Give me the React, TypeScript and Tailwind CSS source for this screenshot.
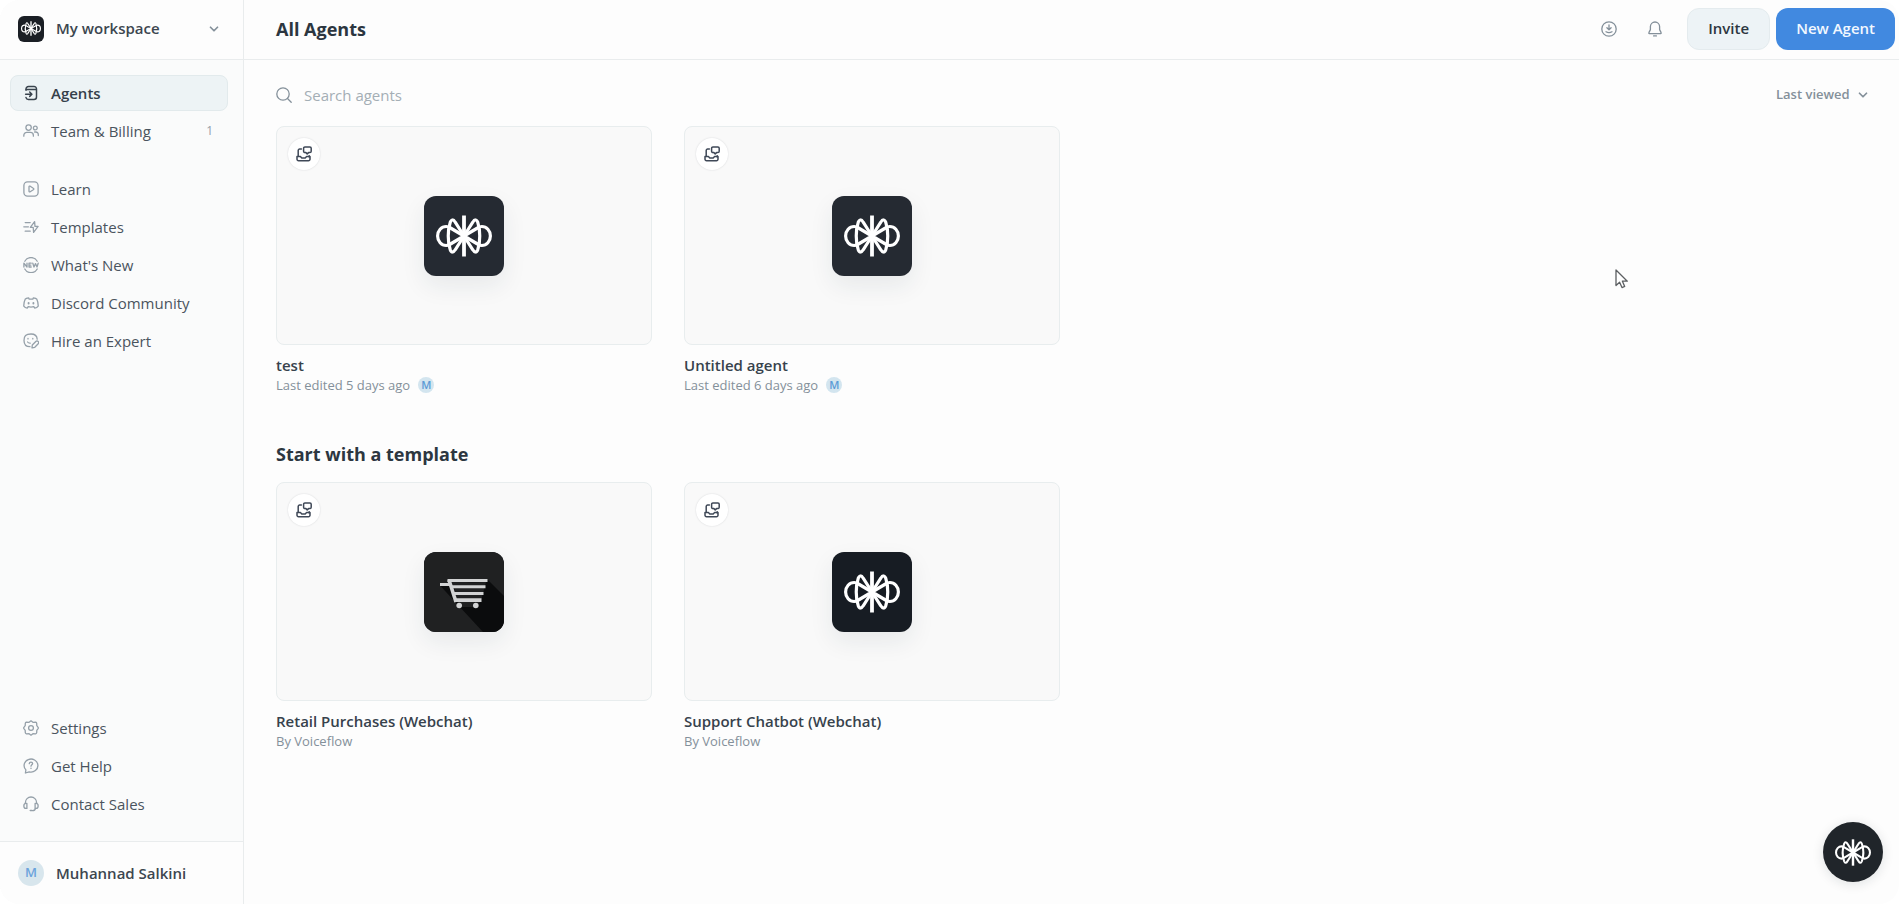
import type { ReactNode } from "react";
import { ChevronDown } from "lucide-react";

function Mark({ className }: { className?: string }) {
  const wing = (
    <>
      <path d="M28 21 L14.500 13 C12.600 11.900 11.200 11.500 10.200 11.500 A8.600 9.500 0 0 0 10.200 30.500 C11.200 30.500 12.600 30.100 14.500 29 Z" />
      <path d="M28 21 L19.200 7.200 C17.400 4.200 15.400 4.200 14.200 7.400 C11.600 15 11.600 27 14.200 34.600 C15.400 37.800 17.400 37.800 19.200 34.800 Z" />
    </>
  );
  return (
    <svg viewBox="0 0 56 42" className={className} fill="none" stroke="#fff" strokeWidth="3.2" strokeLinejoin="round" aria-hidden="true">
      {wing}
      <g transform="matrix(-1 0 0 1 56 0)">{wing}</g>
      <path d="M28 0.500 V41.500" strokeWidth="3.800" />
    </svg>
  );
}

function Icon({ children, className = "size-4" }: { children: ReactNode; className?: string }) {
  return (
    <svg viewBox="0 0 16 16" className={`shrink-0 ${className}`} fill="none" stroke="currentColor" strokeWidth="1.3" strokeLinecap="round" strokeLinejoin="round" aria-hidden="true">
      {children}
    </svg>
  );
}

const icons = {
  agents: (
    <g strokeWidth="1.5">
      <path d="M3 5.2 V4 a2.5 2.5 0 0 1 2.5-2.5 h5 A2.5 2.5 0 0 1 13.5 4 v8 a2.5 2.5 0 0 1-2.5 2.5 H5.5 A2.5 2.5 0 0 1 3 12.6" />
      <path d="M3.2 4.6 H13.3" />
      <path d="M2.6 9.2 H8.6 M6.7 7 L8.9 9.2 L6.7 11.4" />
    </g>
  ),
  team: (
    <>
      <circle cx="5.6" cy="4.6" r="2.7" />
      <path d="M0.8 13.2 V12.4 a3 3 0 0 1 3-3 h3.6 a3 3 0 0 1 3 3 V13.2" />
      <circle cx="12.3" cy="5" r="1.9" />
      <path d="M11.6 9 h1.2 a2.5 2.5 0 0 1 2.5 2.5 V12.6" />
    </>
  ),
  learn: (
    <>
      <rect x="0.9" y="0.9" width="14.2" height="14.2" rx="3.6" />
      <path d="M6 5.8 C6 5 6.6 4.9 7.2 5.2 L10.3 7.2 C11 7.6 11 8.3 10.3 8.8 L7.2 10.7 C6.6 11.1 6 10.9 6 10.2 Z" />
    </>
  ),
  templates: (
    <>
      <path d="M2.2 3.6 H7.2 M0.8 7.8 H5.4 M2.2 12.2 H7.2" />
      <path d="M11.6 2.6 L7.3 8.3 H10.2 L10.6 13.4 L15.1 7.4 H12 Z" />
    </>
  ),
  expert: (
    <>
      <path d="M14.2 6.2 C14 3 12.6 1 8 1 C2.8 1 1 3 1 7.4 C1 11.4 2.6 13.6 7 13.7" />
      <path d="M5 5.4 V5.9 M9.8 5.4 V5.9 M4.6 9 C5.3 10 6.2 10.3 7.2 10.2" />
      <path d="M9 14.9 L9.3 12 L12.8 8.5 A1.6 1.6 0 0 1 15.2 10.8 L11.8 14.3 Z" />
    </>
  ),
  settings: (
    <>
      <path d="M8 0.8 L9.9 2.3 L12.6 2.1 A1.5 1.5 0 0 1 13.7 3.3 L13.8 5.7 L15.1 7.3 A1.3 1.3 0 0 1 15.1 8.7 L13.8 10.3 L13.7 12.6 A1.5 1.5 0 0 1 12.6 13.8 L9.9 13.7 L8 15.2 L6.1 13.7 L3.4 13.8 A1.5 1.5 0 0 1 2.3 12.6 L2.2 10.3 L0.9 8.7 A1.3 1.3 0 0 1 0.9 7.3 L2.2 5.7 L2.3 3.3 A1.5 1.5 0 0 1 3.4 2.1 L6.1 2.3 Z" />
      <circle cx="8" cy="8" r="2.4" />
    </>
  ),
  help: (
    <>
      <path d="M2.4 15 L2.9 11.9 A6.9 6.5 0 1 1 6.2 13.8 Z" />
      <path d="M6.3 5.6 C6.4 3.6 9.6 3.6 9.6 5.6 C9.6 6.8 8 6.9 8 8.2 M8 10.2 V10.4" />
    </>
  ),
  sales: (
    <>
      <path d="M2.4 7.4 V6.6 A5.6 5.6 0 0 1 13.6 6.6 V7.4" />
      <path d="M3.9 7.4 H2.8 C0.2 7.6 0.2 12.2 2.8 12.4 H3.9 Z M12.1 7.4 H13.2 C15.8 7.6 15.8 12.2 13.2 12.4 H12.1 Z" />
      <path d="M12.4 12.6 C12.2 14.2 11 14.6 9.4 14.6 M7.2 14.5 H8.8" />
    </>
  ),
};

const newIcon = (
  <Icon>
    <path d="M1.8 4.2 A7.1 7.1 0 0 1 14.2 4.2 M1.8 12 A7.1 7.1 0 0 0 14.2 12" />
    <path d="M0.9 10 V6.2 L4 10 V6.2 M8.2 6.2 H6 V10 H8.2 M6 8.1 H7.9 M9.8 6.2 L11 10 L12.5 6.6 L14 10 L15.2 6.2" />
  </Icon>
);

const discordIcon = (
  <Icon>
    <path d="M5.6 2.8 C3.8 3 2.6 3.6 2.2 4.2 C1.2 6.2 0.7 8.6 0.8 11.2 C1.6 12.3 2.8 13 4.2 13.2 L5.2 11.7 C7 12.2 9 12.2 10.8 11.7 L11.8 13.2 C13.2 13 14.4 12.3 15.2 11.2 C15.3 8.6 14.8 6.2 13.8 4.2 C13.4 3.6 12.2 3 10.4 2.8 L9.8 4.2 H6.2 Z" />
    <path d="M5.6 7.9 V8.6 M10.4 7.9 V8.6" strokeWidth="1.9" />
  </Icon>
);

type NavEntry = { label: string; icon: ReactNode; active?: boolean; count?: number };

const primary: NavEntry[] = [
  { label: "Agents", icon: <Icon>{icons.agents}</Icon>, active: true },
  { label: "Team & Billing", icon: <Icon>{icons.team}</Icon>, count: 1 },
];
const resources: NavEntry[] = [
  { label: "Learn", icon: <Icon>{icons.learn}</Icon> },
  { label: "Templates", icon: <Icon>{icons.templates}</Icon> },
  { label: "What's New", icon: newIcon },
  { label: "Discord Community", icon: discordIcon },
  { label: "Hire an Expert", icon: <Icon>{icons.expert}</Icon> },
];
const support: NavEntry[] = [
  { label: "Settings", icon: <Icon>{icons.settings}</Icon> },
  { label: "Get Help", icon: <Icon>{icons.help}</Icon> },
  { label: "Contact Sales", icon: <Icon>{icons.sales}</Icon> },
];

function NavList({ items }: { items: NavEntry[] }) {
  return (
    <ul className="flex flex-col gap-0.5">
      {items.map((item) => (
        <li key={item.label}>
          <a
            href="#"
            aria-current={item.active ? "page" : undefined}
            className={
              item.active
                ? "flex h-9 items-center gap-3 rounded-lg border border-[#e2eaec] bg-[#edf3f5] px-3 text-[15px] font-semibold text-[#35404a]"
                : "flex h-9 items-center gap-3 rounded-lg border border-transparent px-3 text-[15px] text-[#4a545e]"
            }
          >
            <span className={item.active ? "text-[#39434d]" : "text-[#95a0a9]"}>{item.icon}</span>
            <span className="grow">{item.label}</span>
            {item.count !== undefined && <span className="pr-0.5 text-xs text-[#95a0a9]">{item.count}</span>}
          </a>
        </li>
      ))}
    </ul>
  );
}

function CartArt() {
  return (
    <svg viewBox="0 0 80 80" className="size-20 rounded-xl" aria-hidden="true">
      <rect width="80" height="80" fill="#202122" />
      <path d="M63.500 27.500 L80 44 V80 H59 L16.500 34 L30 33 Z" fill="#0b0c0d" />
      <path d="M29 31 L62 30 L57 49 L51 55 H35 Z" fill="#202122" />
      <g fill="none" stroke="#d2d3d4" strokeWidth="3">
        <path d="M23.500 28.500 H63.500" />
        <path d="M16 32.500 H26" />
        <path d="M25 28 L32 50" strokeWidth="3.600" />
        <path d="M28 34.800 H61.500" />
        <path d="M30 41.500 H59.500" />
        <path d="M31 48.200 H57.500" strokeWidth="3.800" />
      </g>
      <circle cx="35.200" cy="53.500" r="2.800" fill="#d2d3d4" />
      <circle cx="51.800" cy="53.500" r="2.800" fill="#d2d3d4" />
    </svg>
  );
}

type Card = { title: string; detail: string; art: "soft" | "dark" | "cart"; avatar?: string };

const agents: Card[] = [
  { title: "test", detail: "Last edited 5 days ago", art: "soft", avatar: "M" },
  { title: "Untitled agent", detail: "Last edited 6 days ago", art: "soft", avatar: "M" },
];
const templates: Card[] = [
  { title: "Retail Purchases (Webchat)", detail: "By Voiceflow", art: "cart" },
  { title: "Support Chatbot (Webchat)", detail: "By Voiceflow", art: "dark" },
];

function CardGrid({ cards }: { cards: Card[] }) {
  return (
    <ul className="grid grid-cols-[repeat(auto-fill,376px)] gap-8">
      {cards.map((card) => (
        <li key={card.title}>
          <a href="#" className="block">
            <div className="relative flex h-[219px] items-center justify-center rounded-lg border border-[#e8edee] bg-[#f9f9f9]">
              <span className="absolute top-[11px] left-[11px] flex size-8 items-center justify-center rounded-full bg-white text-[#3f4857] shadow-[0_0_2px_rgba(20,30,40,0.15)]">
                <Icon>
                  <g strokeWidth="1.5">
                    <path d="M5.400 3 H3.600 A1.400 1.400 0 0 0 2.200 4.400 V10.300 M13.200 9.800 V11" />
                    <path d="M1 10.600 H4.400 L5.800 12.100 H9.200 L10.600 10.600 H14 V13.200 A1.500 1.500 0 0 1 12.500 14.700 H2.500 A1.500 1.500 0 0 1 1 13.200 Z" />
                    <path d="M8.900 1 H13.900 A1.300 1.300 0 0 1 15.200 2.300 V5.300 A1.300 1.300 0 0 1 13.900 6.600 H12.600 L11.200 7.900 L9.900 6.600 H8.900 A1.300 1.300 0 0 1 7.600 5.300 V2.300 A1.300 1.300 0 0 1 8.900 1 Z" />
                  </g>
                </Icon>
              </span>
              <div
                className={
                  card.art === "soft"
                    ? "flex size-20 items-center justify-center rounded-xl bg-[#252a32] shadow-[0_10px_24px_rgba(30,45,60,0.08)]"
                    : "flex size-20 items-center justify-center rounded-xl bg-[#171c23] shadow-[0_10px_24px_rgba(30,45,60,0.08)]"
                }
              >
                {card.art === "cart" ? <CartArt /> : <Mark className="w-14" />}
              </div>
            </div>
            <h3 className="mt-2 text-[15px] leading-6 font-semibold text-[#37424c]">{card.title}</h3>
            <div className="flex items-center gap-2 text-[13px] leading-4 text-[#84909a]">
              <span>{card.detail}</span>
              {card.avatar && (
                <span className="flex size-4 items-center justify-center rounded-full bg-[#d3e5ef] text-[11px] font-semibold text-[#5b9bd6]">
                  {card.avatar}
                </span>
              )}
            </div>
          </a>
        </li>
      ))}
    </ul>
  );
}

export default function App() {
  return (
    <div className="bg-white font-['Open_Sans',sans-serif] text-[#2c3640]">
      <div className="flex min-h-screen overflow-hidden rounded-[20px] bg-[#fdfdfd]">
        <aside className="flex w-61 shrink-0 flex-col border-r border-[#e9eced] bg-[#fafbfb]">
          <button type="button" className="flex h-15 items-center gap-3 border-b border-[#e9eced] bg-[#fdfdfd] pr-[22px] pb-0.5 pl-[18px] text-left">
            <span className="flex size-[26px] items-center justify-center rounded-md bg-[#1b1f25]">
              <Mark className="w-5" />
            </span>
            <span className="grow text-[15px] font-semibold text-[#3c464f]">My workspace</span>
            <ChevronDown className="size-3.5 text-[#84909a]" strokeWidth={3} />
          </button>
          <nav className="flex grow flex-col gap-[22px] pt-[15px] pr-[15px] pb-[19px] pl-2.5" aria-label="Main">
            <NavList items={primary} />
            <NavList items={resources} />
            <div className="mt-auto">
              <NavList items={support} />
            </div>
          </nav>
          <button type="button" className="flex h-[63px] items-center gap-3 border-t border-[#e9eced] bg-[#fdfdfd] px-[18px] text-left">
            <span className="flex size-[26px] items-center justify-center rounded-full bg-[#d8e6ed] text-[13px] font-semibold text-[#6ba3dc]">M</span>
            <span className="text-[15px] font-semibold text-[#3c464f]">Muhannad Salkini</span>
          </button>
        </aside>

        <div className="flex min-w-0 grow flex-col">
          <header className="flex h-15 items-center border-b border-[#e9eced] pr-1 pb-0.5 pl-8">
            <h1 className="grow text-lg font-bold">All Agents</h1>
            <div className="flex items-center gap-[30px] pr-6 text-[#84909a]">
              <button type="button" aria-label="Downloads">
                <Icon>
                  <circle cx="8" cy="8" r="7.2" />
                  <path d="M8 3.800 V8.600 M5.900 6.700 L8 8.800 L10.100 6.700 M5 10.800 C6.800 11.900 9.200 11.900 11 10.800" />
                </Icon>
              </button>
              <button type="button" aria-label="Notifications">
                <Icon>
                  <path d="M8 1 A4.600 4.600 0 0 0 3.400 5.600 V8.600 L1.900 11.600 A0.600 0.600 0 0 0 2.400 12.600 H13.600 A0.600 0.600 0 0 0 14.100 11.600 L12.600 8.600 V5.600 A4.600 4.600 0 0 0 8 1 Z M6.600 14.900 H9.400" />
                </Icon>
              </button>
            </div>
            <div className="flex gap-1.5">
              <button type="button" className="h-[42px] rounded-xl border border-[#e4ebee] bg-[#edf3f6] px-5 text-[15px] font-semibold">
                Invite
              </button>
              <button type="button" className="h-[42px] rounded-xl bg-[#4189e0] px-5 text-[15px] font-semibold text-[#f2f8ff]">
                New Agent
              </button>
            </div>
          </header>

          <main className="grow pt-[17px] pr-[29px] pb-10 pl-8">
            <div className="mb-[13px] flex h-9 items-center justify-between">
              <div className="flex items-center gap-3">
                <Icon className="size-4 text-[#84909a]">
                  <circle cx="7" cy="7" r="6.200" />
                  <path d="M11.500 11.500 L15.200 15.200" />
                </Icon>
                <input
                  type="search"
                  aria-label="Search agents"
                  placeholder="Search agents"
                  className="h-8 w-60 bg-transparent text-[15px] outline-none placeholder:text-[#a4aeb5]"
                />
              </div>
              <div className="flex items-center gap-1.5 text-[#84909a]">
                <select aria-label="Sort agents" className="h-8 appearance-none bg-transparent text-[13px] font-semibold outline-none">
                  <option>Last viewed</option>
                </select>
                <ChevronDown className="size-3.5" strokeWidth={3} aria-hidden="true" />
              </div>
            </div>
            <CardGrid cards={agents} />
            <h2 className="mt-[47px] mb-3.5 text-lg leading-7 font-bold">Start with a template</h2>
            <CardGrid cards={templates} />
          </main>
        </div>
      </div>

      <button type="button" aria-label="Open chat" className="fixed right-4 bottom-5.5 flex size-15 items-center justify-center rounded-full bg-[#20252a] shadow-[0_2px_12px_rgba(20,30,40,0.12)]">
        <Mark className="w-9" />
      </button>
      <svg viewBox="0 0 14 20" className="pointer-events-none absolute top-[269px] left-[1615px] h-5 w-3.5" aria-hidden="true">
        <path d="M1 1 V16.500 L4.600 13.200 L7 18.600 L9.700 17.400 L7.400 12.200 H12.300 Z" fill="#fff" stroke="#5c5f62" strokeWidth="1.300" strokeLinejoin="round" />
      </svg>
    </div>
  );
}
